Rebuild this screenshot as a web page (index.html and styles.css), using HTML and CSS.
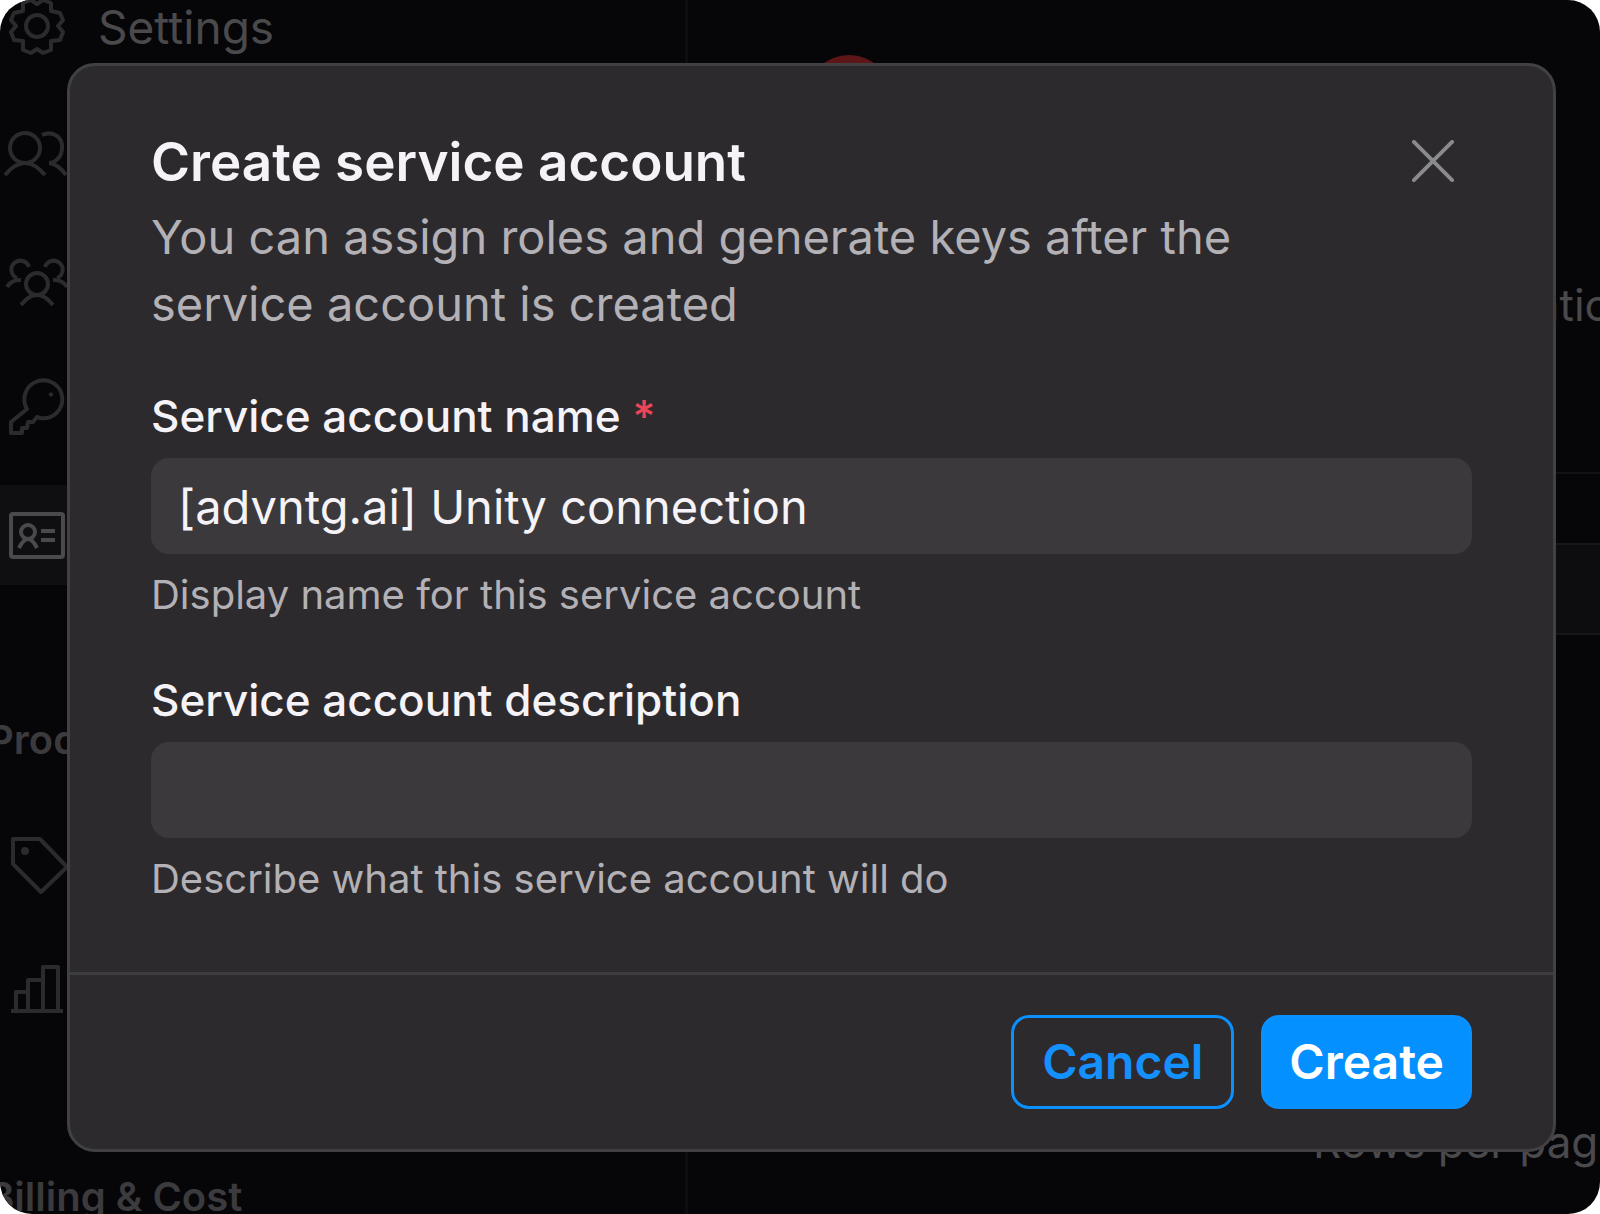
FILE: index.html
```html
<!DOCTYPE html>
<html lang="en">
<head>
  <meta charset="UTF-8" />
  <meta name="viewport" content="width=device-width, initial-scale=1" />
  <title>Create service account</title>
  <link rel="stylesheet" href="styles.css">
</head>
<body>
  <div class="app">
    <nav class="sidebar">
      <a class="nav-item" href="#">
        <svg class="icon" viewBox="0 0 60 60"><path d="M30 7l6-4 8 3v8l9 2 3 7-5 6 5 6-3 8-9 1v9l-8 3-6-4-6 4-8-3v-9l-9-1-3-8 5-6-5-6 3-7 9-2v-8l8-3z"/><circle cx="30" cy="29" r="11"/></svg>
        <span class="nav-label">Settings</span>
      </a>
      <a class="nav-item" href="#" aria-label="Users">
        <svg class="icon" viewBox="0 0 60 60"><circle cx="18" cy="24" r="15"/><path d="M-2 51q20-24 40 0M35 11c12-5 21 3 20 13c0 9-7 15-13 15M42 39q9 1 17 12"/></svg>
      </a>
      <a class="nav-item" href="#" aria-label="Groups">
        <svg class="icon" viewBox="0 0 60 60"><circle cx="30" cy="33" r="11"/><path d="M14 54q16-20 32 0M10 27a9 9 0 1 1 12-11M0 36q5-8 14-7M50 27a9 9 0 1 0-12-11M60 36q-5-8-14-7"/></svg>
      </a>
      <a class="nav-item" href="#" aria-label="Access keys">
        <svg class="icon" viewBox="0 0 60 60"><path d="M20 31a19 19 0 1 1 13 9l-3-1-4 5h-5l-1 6h-5v5h-11v-11z"/><path d="M43 15l2 3"/></svg>
      </a>
      <a class="nav-item active" href="#" aria-label="Service accounts">
        <svg class="icon" viewBox="0 0 60 60"><rect x="4" y="9" width="52" height="43" rx="2"/><circle cx="21" cy="27" r="7"/><path d="M12 43q9-18 18 0M34 26h14M34 35h14"/></svg>
      </a>
      <h2 class="nav-heading">Products</h2>
      <a class="nav-item" href="#" aria-label="Tags">
        <svg class="icon" viewBox="0 0 60 60"><path d="M6 4h27l27 28-26 25-28-28z"/><circle cx="18" cy="16" r="2"/></svg>
      </a>
      <a class="nav-item" href="#" aria-label="Reports">
        <svg class="icon" viewBox="0 0 60 60"><path d="M4 49h52M9 49v-19h12v19M21 30v-12h15v31M36 18v-13h15v44"/></svg>
      </a>
      <h2 class="nav-heading">Billing &amp; Cost</h2>
    </nav>
    <main class="content">
      <span class="alert-dot"></span>
      <p class="intro">Organization</p>
      <div class="list">
        <div class="list-head"></div>
        <div class="list-row"></div>
      </div>
      <p class="pager">Rows per page</p>
    </main>
  </div>

  <div class="overlay">
    <form class="modal" role="dialog" aria-labelledby="modal-title">
      <div class="modal-body">
        <header class="modal-header">
          <div>
            <h1 id="modal-title" class="modal-title">Create service account</h1>
            <p class="modal-text">You can assign roles and generate keys after the service account is created</p>
          </div>
          <button class="close" type="button" aria-label="Close">
            <svg class="close-icon" viewBox="0 0 44 44"><path d="M2 2l40 40M42 2L2 42"/></svg>
          </button>
        </header>
        <div class="field">
          <label class="label" for="name">Service account name <span class="required">*</span></label>
          <input class="input" id="name" type="text" value="[advntg.ai] Unity connection">
          <p class="help">Display name for this service account</p>
        </div>
        <div class="field">
          <label class="label" for="description">Service account description</label>
          <input class="input" id="description" type="text">
          <p class="help">Describe what this service account will do</p>
        </div>
      </div>
      <footer class="modal-footer">
        <button class="btn btn-outline" type="button">Cancel</button>
        <button class="btn btn-primary" type="submit">Create</button>
      </footer>
    </form>
  </div>
</body>
</html>
```
FILE: styles.css
```css
* {
  box-sizing: border-box;
}
body {
  margin: 0;
  background: #fff;
  font-family: Inter, sans-serif;
  font-optical-sizing: none;
}
h1, h2, p {
  margin: 0;
}

/* page behind the dialog */
.app {
  display: flex;
  height: 100vh;
  overflow: hidden;
  border-radius: 32px;
  background: #060508;
  color: #4a494c;
}
.sidebar {
  display: flex;
  flex-direction: column;
  gap: 27px;
  width: 43%;
  margin-top: -23px;
  border-right: 3px solid #0d0c0f;
}
.nav-item {
  display: flex;
  flex-shrink: 0;
  align-items: center;
  gap: 31px;
  height: 100px;
  padding-left: 7px;
  color: #2b2a2d;
  text-decoration: none;
}
.nav-item.active {
  background: #0f0e11;
  color: #4a494c;
}
.nav-label {
  color: #4a494c;
  font-size: 46px;
}
.icon {
  width: 60px;
  height: 60px;
  overflow: visible;
  fill: none;
  stroke: currentColor;
  stroke-width: 4;
  stroke-linejoin: round;
}
.nav-heading {
  flex-shrink: 0;
  margin: 98px 0 18px -12px;
  font-size: 40px;
  line-height: 60px;
  font-weight: 600;
  color: #3b3a3d;
}
.content {
  display: flex;
  flex: 1;
  flex-direction: column;
  padding-top: 55px;
}
.alert-dot {
  width: 86px;
  height: 86px;
  margin-left: 118px;
  border-radius: 50%;
  background: #5c1618;
}
.intro {
  margin: 132px -37px 0 0;
  font-size: 44px;
  line-height: 64px;
  text-align: right;
}
.list {
  margin-top: 135px;
  border-top: 2px solid #121114;
}
.list-head {
  height: 69px;
}
.list-row {
  height: 92px;
  border: solid #161518;
  border-width: 2px 0;
  background: #0d0c0f;
}
.pager {
  margin: auto -24px 40px 0;
  font-size: 44px;
  line-height: 64px;
  text-align: right;
}

/* dialog */
.overlay {
  position: fixed;
  inset: 0;
  display: flex;
  align-items: flex-start;
  padding: 63px 44px 0 67px;
}
.modal {
  flex: 1;
  border: 3px solid #414043;
  border-radius: 28px;
  background: #2c2a2d;
  color: #f5f3f7;
}
.modal-body {
  display: flex;
  flex-direction: column;
  gap: 52px;
  padding: 62px 81px 66px;
}
.modal-header {
  display: flex;
  justify-content: space-between;
  align-items: flex-start;
  gap: 80px;
}
.modal-title {
  margin-bottom: 7px;
  font-size: 53px;
  line-height: 68px;
  font-weight: 600;
}
.modal-text {
  padding-bottom: 1px;
  color: #b3b1b5;
  font-size: 47px;
  line-height: 67px;
}
.close {
  margin: 12px 18px 0 0;
  padding: 0;
  border: none;
  background: none;
  color: #8b8a8d;
  cursor: pointer;
}
.close-icon {
  display: block;
  width: 42px;
  height: 42px;
  fill: none;
  stroke: currentColor;
  stroke-width: 4;
  stroke-linecap: round;
}
.field {
  display: flex;
  flex-direction: column;
}
.label {
  margin-bottom: 16px;
  font-size: 44px;
  line-height: 52px;
  font-weight: 500;
}
.required {
  color: #ee4458;
}
.input {
  width: 100%;
  height: 96px;
  padding: 0 27px;
  border: none;
  border-radius: 18px;
  background: #3b393c;
  color: #f5f3f7;
  font: inherit;
  font-size: 47px;
}
.help {
  margin-top: 15px;
  padding-bottom: 1px;
  color: #b3b1b5;
  font-size: 40px;
  line-height: 52px;
}
.modal-footer {
  display: flex;
  justify-content: flex-end;
  gap: 27px;
  padding: 40px 81px;
  border-top: 3px solid #3d3c3f;
}
.btn {
  height: 94px;
  border: 3px solid #0a90ff;
  border-radius: 18px;
  font: inherit;
  font-size: 48px;
  font-weight: 600;
  line-height: 84px;
  cursor: pointer;
}
.btn-outline {
  padding: 0 28px;
  background: transparent;
  color: #1590ff;
}
.btn-primary {
  padding: 0 25px;
  background: #0490ff;
  color: #fff;
}
```
